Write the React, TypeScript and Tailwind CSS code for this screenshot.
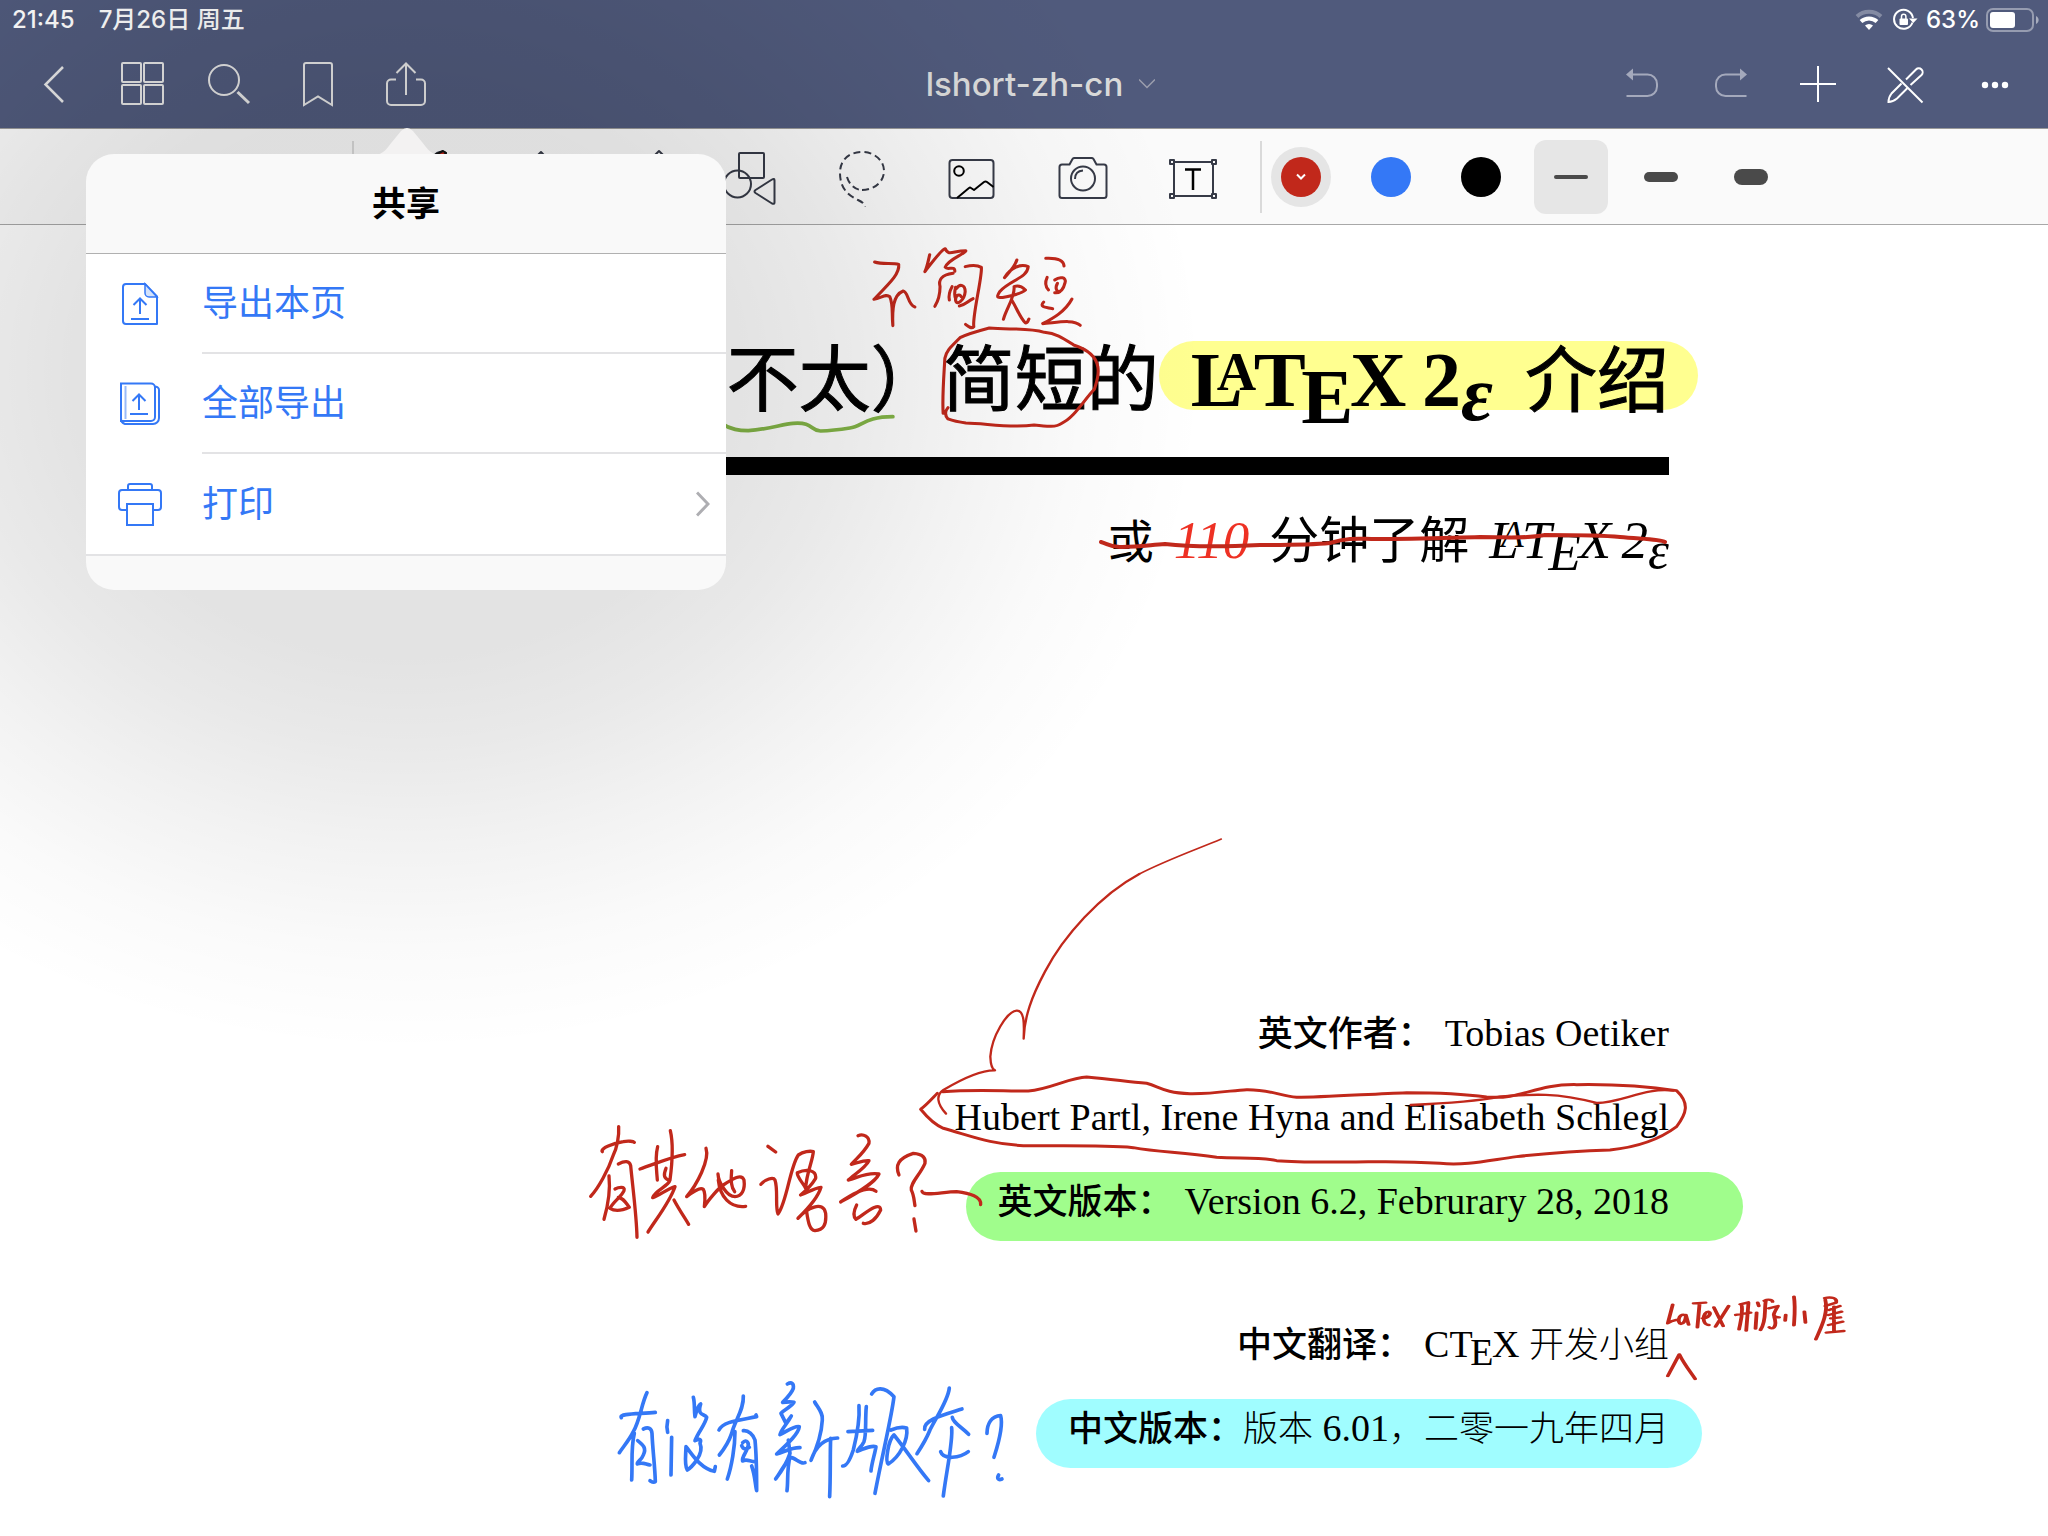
import React from "react";

const UI = "font-['Inter','Noto_Sans_CJK_SC',sans-serif]";

function NavButton({ label, children }: { label: string; children: React.ReactNode }) {
  return (
    <button type="button" aria-label={label} className="flex h-[88px] w-[88px] items-center justify-center">
      <svg width="48" height="48" viewBox="0 0 48 48" fill="none" stroke="currentColor" strokeWidth="2" aria-hidden="true">
        {children}
      </svg>
    </button>
  );
}

function StatusBar() {
  return (
    <div className="flex h-10 items-center justify-between pl-3 pr-2 text-2xl font-medium text-white">
      <div className="flex items-center gap-6">
        <span>21:45</span>
        <span>7月26日 周五</span>
      </div>
      <div className="flex items-center gap-2">
        <svg width="30" height="22" viewBox="0 0 30 22" fill="none" aria-hidden="true">
          <path d="M3 7.500a17.500 17.500 0 0 1 24 0" stroke="#fff" strokeOpacity=".3" strokeWidth="4" />
          <path d="M7 12.500a12 12 0 0 1 16 0" stroke="#fff" strokeWidth="4" />
          <path d="M15 21l-4-4.500a6 6 0 0 1 8 0z" fill="#fff" />
        </svg>
        <svg width="26" height="24" viewBox="0 0 26 24" fill="none" aria-hidden="true">
          <path d="M20.500 14.500a9.500 9.500 0 1 1 .5-4.500" stroke="#fff" strokeWidth="2" />
          <path d="M17 10.500h8.500l-4.200 4.500z" fill="#fff" />
          <rect x="7.500" y="10.500" width="8.500" height="6.500" rx="1" fill="#fff" />
          <path d="M9.500 11V8.500a2.200 2.200 0 0 1 4.400 0V11" stroke="#fff" strokeWidth="1.500" />
        </svg>
        <div className="flex items-center gap-[6px]">
          <span>63%</span>
          <svg width="54" height="24" viewBox="0 0 54 24" fill="none" aria-hidden="true">
            <rect x="1" y="1" width="46" height="22" rx="6" stroke="#fff" strokeOpacity=".4" strokeWidth="2" />
            <rect x="4" y="4" width="25" height="16" rx="3" fill="#fff" />
            <path d="M50 8c3.500 1.500 3.500 6.500 0 8z" fill="#fff" fillOpacity=".5" />
          </svg>
        </div>
      </div>
    </div>
  );
}

function NavBar() {
  return (
    <nav className="flex h-[88px] items-center justify-between pl-[10px] pr-[9px] text-[#e6e6e6]">
      <div className="flex">
        <NavButton label="返回">
          <path d="M33 7L15.500 24.500 33 42" strokeWidth="2.500" />
        </NavButton>
        <NavButton label="页面">
          <rect x="4" y="3" width="19" height="19" rx="1" />
          <rect x="26" y="3" width="19" height="19" rx="1" />
          <rect x="4" y="25" width="19" height="19" rx="1" />
          <rect x="26" y="25" width="19" height="19" rx="1" />
        </NavButton>
        <NavButton label="搜索">
          <circle cx="18" cy="20" r="15" />
          <path d="M31.500 32L43 43" strokeWidth="3" />
        </NavButton>
        <NavButton label="书签">
          <path d="M10 45V5a2 2 0 0 1 2-2h24a2 2 0 0 1 2 2v40l-14-8.500z" />
        </NavButton>
        <NavButton label="共享">
          <path d="M24 35V4M14.500 13L24 3.500 33.500 13" />
          <path d="M14 19.500H9a4 4 0 0 0-4 4V41a4 4 0 0 0 4 4h30a4 4 0 0 0 4-4V23.500a4 4 0 0 0-4-4h-5" />
        </NavButton>
      </div>
      <button type="button" className="flex items-center gap-4 pl-8 text-[#dadada]">
        <span className="text-[33px] font-medium leading-none">lshort-zh-cn</span>
        <svg width="16" height="12" viewBox="0 0 16 12" fill="none" stroke="#9c9fae" strokeWidth="1.500" aria-hidden="true">
          <path d="M0 1.500l8 8 8-8" />
        </svg>
      </button>
      <div className="flex text-white">
        <NavButton label="撤销">
          <g stroke="#a4a9bc">
            <path d="M13 14.500h15.500a9.500 9.500 0 0 1 9.500 9.500v2.500a9.500 9.500 0 0 1-9.500 9.500H7.500" />
            <path d="M7 14.500l7-6v12z" fill="#a4a9bc" stroke="none" />
          </g>
        </NavButton>
        <NavButton label="重做">
          <g stroke="#a4a9bc">
            <path d="M34 14.500H18.500A9.500 9.500 0 0 0 9 24v2.500a9.500 9.500 0 0 0 9.500 9.500h21" />
            <path d="M40 14.500l-7-6v12z" fill="#a4a9bc" stroke="none" />
          </g>
        </NavButton>
        <NavButton label="添加">
          <path d="M23 6v36M5 24h36" />
        </NavButton>
        <NavButton label="只读模式">
          <path d="M5 8l34.500 34.500" />
          <path d="M23 19.500L33 9.500a3.800 3.800 0 0 1 5.500 5.500L27.500 25M18.500 23.500L8.500 33.500C6.500 36 5.500 39 5.500 42c3 0 6-1.500 8.500-3.500L24.500 28" />
        </NavButton>
        <NavButton label="更多">
          <g fill="#fff" stroke="none">
            <circle cx="14" cy="25" r="3.200" />
            <circle cx="24" cy="25" r="3.200" />
            <circle cx="34" cy="25" r="3.200" />
          </g>
        </NavButton>
      </div>
    </nav>
  );
}

function Tool({ label, children }: { label: string; children: React.ReactNode }) {
  return (
    <button type="button" aria-label={label} className="flex h-full w-[111px] items-center justify-center">
      <svg width="60" height="60" viewBox="0 0 60 60" fill="none" stroke="#363a47" strokeWidth="2" strokeLinejoin="round" aria-hidden="true">
        {children}
      </svg>
    </button>
  );
}

function Swatch({ label, color }: { label: string; color: string }) {
  return (
    <button type="button" aria-label={label} className="flex h-[74px] w-[78px] items-center justify-center">
      <span className={`size-10 rounded-full ${color}`} />
    </button>
  );
}

function ToolBar() {
  return (
    <div className="flex h-[96px] items-center border-b border-[#a8a8a8] bg-[#fafafa]">
      <div className="w-[352px]" />
      <div className="h-[72px] w-[2px] bg-[#dadada]" />
      <div className="flex h-full pl-[7px] pr-[11px]">
        <Tool label="钢笔">
          <path d="M10 50l4-12L50 6q6-3 9 0L24 46z" />
          <path d="M46 9l10-5 3 2-8 8z" fill="#c1281b" stroke="#111" />
        </Tool>
        <Tool label="橡皮擦">
          <path d="M18 30L43 5l12 13-25 26z" />
        </Tool>
        <Tool label="荧光笔">
          <path d="M12 48L46 8l4-4 4 4 2 8-34 36z" />
        </Tool>
        <Tool label="形状">
          <rect x="19" y="6" width="25" height="25" rx="1" />
          <circle cx="17.500" cy="37" r="13.500" />
          <path d="M52 32.500q2.500-1.500 2.500 1v22q0 2-2.500 1L35.500 46q-2-1.500 0-3z" />
        </Tool>
        <Tool label="套索">
          <g strokeDasharray="7 4">
            <path d="M31 43c12 0 22-8 22-19S43 5 31 5 9 12 9 26c0 17 10 23 18 27 4 2 6 3 7 7" />
            <path d="M16 30c2 7 8 13 15 13" />
          </g>
        </Tool>
        <Tool label="图片">
          <rect x="7.500" y="13" width="44" height="38" rx="3" />
          <circle cx="17" cy="24" r="4.800" stroke="#000" />
          <path d="M15 51l12-10q1-1 2 0l3 2 10-8q1.500-1 3 0l6.500 5" stroke="#000" />
        </Tool>
        <Tool label="相机">
          <path d="M9 51a2.500 2.500 0 0 1-2.500-2.500V20A2.500 2.500 0 0 1 9 17.500h7.500L19.500 12q.7-1 2-1h17q1.300 0 2 1l3 5.500H51a2.500 2.500 0 0 1 2.500 2.500v28.500A2.500 2.500 0 0 1 51 51z" />
          <circle cx="30" cy="31.500" r="12" />
          <path d="M22 32q0-8 8-8.500" />
        </Tool>
        <Tool label="文本">
          <rect x="10" y="15" width="39" height="34" rx="1" />
          <g fill="#fafafa">
            <rect x="6" y="13" width="4" height="4" />
            <rect x="48" y="13" width="4" height="4" />
            <rect x="6" y="47" width="4" height="4" />
            <rect x="48" y="47" width="4" height="4" />
          </g>
          <path d="M21 22.500h16M29 22.500V43" stroke="#000" strokeWidth="2.500" />
        </Tool>
      </div>
      <div className="h-[72px] w-[2px] bg-[#dadada]" />
      <div className="flex items-center gap-3">
        <button type="button" aria-label="红色" className="flex h-[74px] w-[78px] items-center justify-center">
          <span className="flex size-[60px] items-center justify-center rounded-full bg-[#e5e5e5]">
            <span className="flex size-10 items-center justify-center rounded-full bg-[#c1281b]">
              <svg width="12" height="8" viewBox="0 0 12 8" fill="none" stroke="#fff" strokeWidth="2" aria-hidden="true">
                <path d="M2 1.500l4 4 4-4" />
              </svg>
            </span>
          </span>
        </button>
        <Swatch label="蓝色" color="bg-[#3478f6]" />
        <Swatch label="黑色" color="bg-black" />
        <button type="button" aria-label="细" className="mx-[2px] flex size-[74px] items-center justify-center rounded-xl bg-[#e6e6e6]">
          <span className="h-1 w-[34px] rounded-full bg-[#4a4a4a]" />
        </button>
        <button type="button" aria-label="中" className="flex h-[74px] w-[78px] items-center justify-center">
          <span className="h-[10px] w-[34px] rounded-full bg-[#4a4a4a]" />
        </button>
        <button type="button" aria-label="粗" className="flex h-[74px] w-[78px] items-center justify-center">
          <span className="h-4 w-[34px] rounded-full bg-[#4a4a4a]" />
        </button>
      </div>
    </div>
  );
}

function ShareRow({ label, icon, divider, chevron }: { label: string; icon: React.ReactNode; divider?: boolean; chevron?: boolean }) {
  return (
    <li>
      <button type="button" className="flex h-[100px] w-full items-center pl-8 text-left text-[36px] text-[#3478f6]">
        <svg width="44" height="44" viewBox="0 0 44 44" fill="none" stroke="currentColor" strokeWidth="2" aria-hidden="true">
          {icon}
        </svg>
        <span className={`ml-10 flex h-full flex-1 items-center justify-between pr-4 ${divider ? "border-b-2 border-[#e3e3e5]" : ""}`}>
          {label}
          {chevron && (
            <svg width="14" height="26" viewBox="0 0 14 26" fill="none" stroke="#aeaeb2" strokeWidth="3" aria-hidden="true">
              <path d="M1 1.500L12 13 1 24.500" />
            </svg>
          )}
        </span>
      </button>
    </li>
  );
}

function SharePopover() {
  return (
    <div className="absolute left-[86px] top-[154px] z-10 w-[640px]">
      <svg width="64" height="27" viewBox="0 0 64 27" className="absolute -top-[26px] left-[289px]" aria-hidden="true">
        <path d="M0 27c9-1 12-7 17-13L26 3q6-6 12 0l9 11c5 6 8 12 17 13z" fill="#f3f2f2" />
      </svg>
      <div className="relative overflow-hidden rounded-[28px] bg-[#f9f9f9]">
        <h2 className="flex h-[100px] items-center justify-center border-b border-[#b0b0b0] text-[34px] font-bold leading-none text-black">共享</h2>
        <ul className="border-b-2 border-[#e3e3e5] bg-white">
          <ShareRow
            label="导出本页"
            divider
            icon={
              <>
                <path d="M27 2H8a3 3 0 0 0-3 3v34a3 3 0 0 0 3 3h31V14.500z" strokeLinejoin="round" />
                <path d="M27 2v9a4 4 0 0 0 4 4h8z" fill="#d3e2fb" strokeWidth="1.500" />
                <path d="M22 32V16M15.500 23L22 16.500l6.500 6.500M13 37h18" />
              </>
            }
          />
          <ShareRow
            label="全部导出"
            divider
            icon={
              <>
                <path d="M3 1v35a6 6 0 0 0 4 6h28a6 6 0 0 0 6-6V8a3 3 0 0 0-4-3" />
                <path d="M3 1.500h30a4 4 0 0 1 4 4V35a4 4 0 0 1-4 4H3z" />
                <path d="M7.500 4v33" strokeOpacity=".5" />
                <path d="M21 28V12M14.500 19L21 12.500l6.500 6.500M12 32h18" />
              </>
            }
          />
          <ShareRow
            label="打印"
            chevron
            icon={
              <>
                <path d="M10 8V4a2 2 0 0 1 2-2h20a2 2 0 0 1 2 2v4" />
                <path d="M9 28H4a3 3 0 0 1-3-3V11a3 3 0 0 1 3-3h36a3 3 0 0 1 3 3v14a3 3 0 0 1-3 3h-5" />
                <path d="M9 22h26v21H9z" />
              </>
            }
          />
        </ul>
        <div className="h-[34px]" />
      </div>
    </div>
  );
}

function TeX() {
  return (
    <>
      T<span className="-ml-[0.060em] align-[-0.220em] leading-none">E</span>
      <span className="-ml-[0.040em]">X</span>
    </>
  );
}

function LaTeX2e() {
  return (
    <span className="whitespace-nowrap">
      L<span className="-ml-[0.480em] align-[0.290em] text-[0.7em] leading-none">A</span>
      <span className="-ml-[0.030em]">
        <TeX />
      </span>
      <span className="ml-[0.200em]">2</span>
      <span className="align-[-0.180em] italic leading-none">ε</span>
    </span>
  );
}

function Ink() {
  return (
    <svg
      width="1490"
      height="1300"
      viewBox="379 225 1490 1300"
      className="pointer-events-none absolute left-0 top-0 overflow-visible"
      fill="none"
      stroke="#c1281b"
      strokeWidth="3"
      strokeLinecap="round"
      strokeLinejoin="round"
      aria-hidden="true"
    >
      <g transform="translate(700 230) scale(.3444 .3333)">
        <g strokeWidth="9">
          <path d="M507 96C530 104 560 97 577 103C580 130 555 155 505 208C525 205 540 190 551 200C562 225 556 250 560 287C558 240 560 195 590 183C605 185 603 225 624 231" />
          <path d="M667 74C662 95 660 110 653 125C675 95 700 60 712 56C722 80 735 62 772 62C765 75 720 88 712 112C718 122 740 105 740 124" />
          <path d="M735 130C700 135 692 150 697 170C697 195 690 215 682 229M732 170C724 185 722 200 724 210M742 172C738 190 740 200 742 205M745 175C755 160 770 165 770 185C768 210 745 230 742 210C742 195 755 190 758 200M753 228C770 225 775 215 793 206" />
          <path d="M770 110C790 105 805 105 817 112C820 140 790 260 795 290C788 298 780 290 771 283" />
          <path d="M920 90C912 115 895 130 884 143C900 115 930 100 953 110C950 145 900 150 870 185C858 205 865 205 890 200C915 195 935 190 945 180C935 170 925 165 912 170C915 200 890 235 881 268M905 210C920 235 930 265 945 279C953 279 952 272 955 267" />
          <path d="M1004 85C1025 84 1055 85 1057 108M1008 142C1002 155 1003 170 1012 180M1030 150C1045 138 1065 142 1060 158C1055 180 1045 190 1030 188M1038 160C1030 175 1035 185 1045 185M998 216C985 230 1000 232 1024 236M1080 207C1060 245 1025 265 995 281C1025 280 1085 265 1104 286" />
        </g>
        <path strokeWidth="9" d="M720 533C710 545 710 555 720 567C740 575 755 577 772 579C830 580 900 595 970 585C1010 590 1035 592 1050 580C1085 565 1115 510 1145 478C1152 455 1160 435 1155 410C1150 380 1130 360 1085 345C1055 325 1035 310 1000 307C950 292 890 300 840 294C800 305 770 315 755 323C735 345 715 360 711 385C708 440 703 500 706 550" />
        <path strokeWidth="11" stroke="#83b547" d="M60 578C90 600 115 602 140 602C200 598 240 582 270 580C330 575 320 603 350 603C380 602 410 598 435 594C470 590 480 560 560 560" />
      </g>

      <path strokeWidth="4" d="M1101 542C1108 544 1112 548 1122 547C1140 547 1150 545 1165 544C1200 548 1240 546 1260 545C1290 545 1310 545 1330 543C1350 537 1360 539 1375 539C1420 539 1440 538 1480 537C1510 537 1525 539 1545 535C1580 535 1600 535 1620 537C1640 539 1660 539 1665 542" />

      <g transform="translate(900 820) scale(.3333)">
        <path strokeWidth="5" d="M964 57C880 92 800 120 718 162" />
        <path strokeWidth="7" d="M718 162C600 225 490 350 435 455C395 530 373 590 371 656C372 625 376 570 350 572C320 575 275 650 271 710C272 735 275 748 285 751C240 750 180 780 130 810C108 825 110 850 138 881" />
        <path strokeWidth="9" d="M128 815C220 808 300 813 385 813C450 808 510 772 560 771C640 778 680 785 740 790C780 800 790 818 870 821C950 822 1000 810 1040 809C1110 808 1140 828 1190 832C1270 832 1410 822 1520 818C1610 818 1680 820 1760 831C1870 840 1900 792 2030 794C2160 792 2250 800 2330 812C2370 850 2360 880 2330 920C2290 950 2230 980 2130 990C2050 992 1940 1000 1850 1010C1760 1022 1700 1037 1620 1030C1500 1022 1420 1026 1360 1026C1280 1026 1200 1028 1130 1022C1080 1010 1020 1016 950 1012C850 995 780 998 700 983C600 975 500 979 370 977C270 972 220 950 130 925C105 915 80 890 62 868C80 855 100 832 112 820" />
        <path strokeWidth="7" d="M1532 855C1650 850 1750 840 1800 830C1900 822 1970 818 2090 849C2160 850 2240 800 2320 812" />
      </g>

      <g transform="translate(560 1100) scale(.3333)" strokeWidth="10">
        <path d="M176 80C178 110 170 145 160 165C145 210 115 265 92 289M127 155C120 145 160 130 190 125C205 122 220 124 223 127M147 228C152 275 143 320 132 358M175 192C195 182 208 182 212 197C218 260 230 350 231 412M165 267C175 262 197 258 192 272C185 290 160 305 150 325C165 335 190 330 208 322C195 305 190 295 175 292" />
        <path d="M331 92C340 130 338 180 330 240C325 260 285 270 278 293C300 285 325 265 345 260C330 305 290 355 264 396M293 140C284 175 290 210 292 240M240 207C285 192 330 172 374 164M318 205C310 225 312 235 325 240M342 300C355 325 372 350 386 373" />
        <path d="M438 145C450 180 410 255 380 290C400 275 420 260 430 268C438 280 435 300 433 320C445 300 475 265 490 255C520 235 545 220 552 240C556 270 545 290 525 290C500 290 475 245 474 222M515 212C512 240 515 265 524 275M475 240C480 290 510 325 557 319" />
        <path d="M624 139L647 156M603 253C615 238 640 230 645 240C655 270 645 320 654 342C680 310 690 200 715 165C730 155 750 152 760 155C758 185 740 215 737 265C730 250 710 230 712 218C740 205 770 210 767 235C755 255 740 270 722 285C740 280 760 265 783 262C775 290 740 330 714 355C740 325 790 300 797 340C800 375 790 390 765 392C750 390 745 370 740 335" />
        <path d="M894 107C910 100 930 110 927 130C910 160 890 175 874 193C890 190 910 180 927 182C915 205 880 225 865 240C890 235 920 215 957 222C945 250 880 285 842 306C880 280 925 255 948 274M890 315C880 335 880 350 888 358C910 345 960 300 962 330C950 355 930 375 910 370" />
        <path d="M1017 225C1005 195 1015 175 1060 160C1090 162 1098 175 1095 190C1080 225 1050 250 1054 270C1062 285 1062 300 1065 317M1062 357L1068 393M1086 274C1090 290 1150 275 1190 275C1230 280 1265 290 1262 314" />
      </g>

      <g transform="translate(590 1360) scale(.3333)" strokeWidth="11" stroke="#3478f6">
        <path d="M171 98C155 130 150 180 130 215C118 240 100 260 88 278M94 173C85 160 150 162 196 157M133 220C122 265 128 310 125 360M160 207C175 200 185 205 186 220C188 270 195 320 196 365C190 370 185 365 180 362M143 242C160 255 170 265 160 285C155 300 140 305 142 312C155 305 165 312 180 315" />
        <path d="M233 182C230 195 230 205 233 217M245 232L243 345M310 112C315 130 312 150 315 170C320 150 325 135 332 132C320 170 345 160 350 172C345 195 325 215 315 242C330 235 335 238 330 250C345 285 300 325 292 330C282 315 288 280 288 260C305 280 330 325 373 334L376 320" />
        <path d="M460 108C462 150 435 180 425 220C415 250 400 270 388 285M387 210C400 185 440 182 500 170L498 165M435 215C435 260 425 320 412 357M460 212C475 210 490 225 495 240C500 290 500 340 500 392C495 370 495 345 485 318M458 248C470 235 480 250 472 265C468 280 455 290 458 303C470 295 480 305 495 305M455 257C460 270 470 268 478 262" />
        <path d="M592 72C605 65 612 70 610 85C605 100 590 115 578 127C595 125 605 125 612 127C600 145 580 150 573 160L588 190L604 168C590 195 575 205 570 224C590 215 615 195 628 200C625 220 600 245 560 282C585 275 605 262 630 263M595 240L600 280C590 310 570 340 557 357C570 340 585 310 600 292C615 290 630 315 645 308M600 290C590 330 595 365 591 392" />
        <path d="M674 126C685 145 700 160 697 180C695 220 680 265 663 301C675 265 700 235 743 234M722 235C720 290 722 350 719 410" />
        <path d="M807 137C810 180 800 230 790 270C780 300 770 320 758 318M829 140C825 180 830 225 822 245C815 260 805 265 802 274C820 268 840 255 858 260C855 280 845 310 843 333M774 215L848 211M845 102C855 85 880 75 912 110C905 170 880 270 855 400M903 210C920 203 935 200 950 204C955 240 930 290 895 312C885 305 895 240 912 225C945 265 980 320 1016 362" />
        <path d="M1078 84C1075 120 1040 170 1020 210C1010 235 995 260 981 281M1004 208C1000 180 1060 165 1116 147M1087 172C1090 190 1115 200 1136 223M1085 203C1090 240 1070 330 1060 408M1052 275C1060 300 1110 295 1135 275" />
        <path d="M1191 220C1192 190 1205 168 1232 167C1242 200 1222 260 1212 292M1226 345C1220 355 1225 362 1236 357" />
      </g>

      <g transform="translate(1020 1270) scale(.5485 .3333)" strokeWidth="7">
        <path d="M1190 104L1181 160C1190 150 1200 150 1200 148M1212 135C1200 130 1198 160 1205 162C1212 160 1214 145 1214 135L1219 164M1228 100L1250 98M1239 100L1235 172M1244 145C1255 145 1262 130 1255 125C1245 125 1242 165 1256 165M1265 112L1282 168M1292 108L1268 170" />
        <path d="M1313 103L1328 97M1305 135L1332 128M1316 108C1318 140 1312 165 1311 178M1328 100L1324 182M1345 98L1347 108M1343 128L1341 176M1357 92C1366 85 1372 92 1372 95M1360 90C1356 120 1362 150 1350 180M1365 115L1382 108C1375 130 1368 140 1384 142M1375 140C1382 175 1370 180 1366 172" />
        <path d="M1411 80C1414 110 1412 140 1411 166M1396 135L1395 152M1430 125L1432 158" />
        <path d="M1467 84C1480 80 1490 84 1488 98L1468 108M1468 88C1475 130 1458 180 1451 208M1475 120L1495 108M1474 135L1498 125M1478 145L1496 142M1484 110L1484 185M1474 165L1500 155M1470 188L1502 183" />
        <path d="M1181 318C1190 290 1198 265 1202 253C1210 280 1222 305 1231 327" />
      </g>
    </svg>
  );
}

function Credit({ label, children, highlight = "" }: { label?: string; children: React.ReactNode; highlight?: string }) {
  return (
    <p className={`flex h-[69px] items-baseline whitespace-nowrap rounded-full leading-[58px] ${highlight}`}>
      {label && <span className="mr-3 text-[35px] font-medium">{label}</span>}
      <span className="text-[38px]">{children}</span>
    </p>
  );
}

function Han({ children }: { children: React.ReactNode }) {
  return <span className="text-[35px] font-light">{children}</span>;
}

function DocumentPage() {
  return (
    <main className="flex-1 bg-white">
      <article className="relative mx-auto flex max-w-[1290px] flex-col items-end pt-[116px] font-['Liberation_Serif','Noto_Sans_CJK_SC',serif] text-black">
        <h1 className="flex h-[69px] justify-end whitespace-nowrap text-[72px] leading-[81px]">
          <span className="[-webkit-text-stroke:1px_black]">（不太）简短的</span>
          <span className="-mr-[29px] flex items-baseline rounded-full bg-[#ffff90] pl-8 pr-[29px] leading-[77px]">
            <span className="text-[78px] font-bold">
              <LaTeX2e />
            </span>
            <span className="ml-8 [-webkit-text-stroke:1px_black]">介绍</span>
          </span>
        </h1>
        <div className="mt-[47px] h-[18px] w-full bg-black" />
        <p className="mt-8 flex h-[72px] items-baseline gap-5 whitespace-nowrap text-[50px] leading-[66px]">
          <span className="text-[46px]">或</span>
          <span className="text-[53px] italic text-[#ee3124]">110</span>
          <span>分钟了解</span>
          <span className="text-[53px] italic">
            <LaTeX2e />
          </span>
        </p>
        <div className="mt-[425px] flex flex-col items-end gap-[15px] pb-[68px]">
          <Credit label="英文作者：">Tobias Oetiker</Credit>
          <Credit>Hubert Partl, Irene Hyna and Elisabeth Schlegl</Credit>
          <Credit label="英文版本：" highlight="-mr-[74px] bg-[#a0fd8c] pl-8 pr-[74px]">
            Version 6.2, Februrary 28, 2018
          </Credit>
          <div className="mt-[59px]">
            <Credit label="中文翻译：">
              C<TeX /> <Han>开发小组</Han>
            </Credit>
          </div>
          <Credit highlight="-mr-[33px] bg-[#a0fdff] pl-8 pr-[33px]">
            <span className="text-[35px] font-medium">中文版本：</span>
            <Han>版本</Han> 6.01<Han>，二零一九年四月</Han>
          </Credit>
        </div>
        <Ink />
      </article>
    </main>
  );
}

function PopoverShade() {
  return (
    <div className="pointer-events-none absolute inset-0 bg-[radial-gradient(ellipse_800px_680px_at_406px_372px,rgba(0,0,0,0.115)_0%,rgba(0,0,0,0.110)_42%,rgba(0,0,0,0.085)_55%,rgba(0,0,0,0.050)_70%,rgba(0,0,0,0.018)_85%,rgba(0,0,0,0)_100%)]" />
  );
}

export default function App() {
  return (
    <div className={`relative flex min-h-screen flex-col overflow-hidden bg-white ${UI}`}>
      <header className="border-b border-[#9a9a9a] bg-[#505a7c]">
        <StatusBar />
        <NavBar />
      </header>
      <ToolBar />
      <DocumentPage />
      <PopoverShade />
      <SharePopover />
    </div>
  );
}
